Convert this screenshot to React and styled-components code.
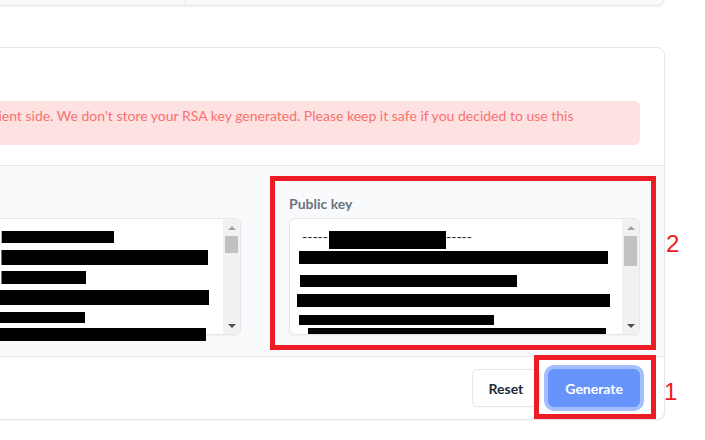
import React from "react";
import styled, { createGlobalStyle } from "styled-components";

const Global = createGlobalStyle`
  html, body { margin: 0; padding: 0; background: #ffffff; }
  body { font-family: Lato, "Liberation Sans", sans-serif; overflow: hidden; }
  * { box-sizing: border-box; }
`;

const Viewport = styled.div`
  position: relative;
  width: 705px;
  height: 440px;
  overflow: hidden;
`;

const Page = styled.div`
  width: 800px;
  margin-left: -135px;
  display: flex;
  flex-direction: column;
  gap: 41px;
`;

const TopCard = styled.div`
  margin-top: -41px;
  height: 47px;
  display: grid;
  grid-template-columns: 320px 1fr;
  background: #f9fafb;
  border: 1px solid #e5e7eb;
  border-radius: 0 0 8px 8px;
  box-shadow: 0 1px 2px rgba(0, 0, 0, 0.05);
  overflow: hidden;
`;

const TopCell = styled.div`
  border-right: ${(p) => (p.$divider ? "1px solid #e5e7eb" : "none")};
`;

const Card = styled.section`
  background: #ffffff;
  border: 1px solid #e5e7eb;
  border-radius: 8px;
  box-shadow: 0 1px 2px rgba(0, 0, 0, 0.05);
  overflow: hidden;
`;

const CardBody = styled.div`
  padding: 53px 24px 20px;
`;

const Alert = styled.div`
  background: #fee2e2;
  color: #f87171;
  border-radius: 6px;
  padding: 6px 16px 2px 18px;
  font-size: 14px;
  line-height: 18px;
`;

const KeysSection = styled.div`
  background: #f9fafb;
  border-top: 1px solid #e5e7eb;
  border-bottom: 1px solid #e5e7eb;
  padding: 28px 24px 21px;
  display: grid;
  grid-template-columns: 1fr 1fr;
  gap: 48px;
`;

const Field = styled.div`
  display: flex;
  flex-direction: column;
  gap: 4px;
  min-width: 0;
`;

const Label = styled.label`
  font-size: 14px;
  line-height: 20px;
  font-weight: 700;
  color: #6b7280;
`;

const KeyBox = styled.div`
  height: 117px;
  display: flex;
  background: #ffffff;
  border: 1px solid #e5e7eb;
  border-radius: 6px;
  box-shadow: 0 1px 2px rgba(0, 0, 0, 0.05);
  overflow: ${(p) => (p.$clip ? "hidden" : "visible")};
`;

const KeyLines = styled.div`
  flex: 1;
  min-width: 0;
  display: flex;
  flex-direction: column;
  align-items: flex-start;
  padding-top: 12px;
`;

const Bar = styled.span`
  display: block;
  flex: none;
  background: #000000;
  width: ${(p) => p.$w}px;
  height: ${(p) => p.$h}px;
  margin-left: ${(p) => p.$x || 0}px;
  margin-top: ${(p) => p.$mt || 0}px;
  box-shadow: ${(p) => (p.$mark ? `-1px 0 0 ${p.$mark}` : "none")};
`;

const HeaderRow = styled.div`
  display: flex;
  align-items: flex-start;
  margin-left: ${(p) => p.$x}px;
`;

const DashText = styled.span`
  font-size: 14px;
  line-height: 12px;
  color: #1f2937;
  width: 27px;
  overflow: hidden;
  white-space: nowrap;
`;

const Scrollbar = styled.div`
  width: 17px;
  flex: none;
  background: #f1f1f1;
  display: flex;
  flex-direction: column;
  border-radius: 0 5px 5px 0;
`;

const ScrollButton = styled.div`
  height: 17px;
  flex: none;
  display: flex;
  align-items: center;
  justify-content: center;
`;

const Arrow = styled.span`
  width: 0;
  height: 0;
  border-left: 4px solid transparent;
  border-right: 4px solid transparent;
  ${(p) =>
    p.$down
      ? "border-top: 4px solid #505050;"
      : "border-bottom: 4px solid #a3a3a3;"}
`;

const Track = styled.div`
  flex: 1;
`;

const Thumb = styled.div`
  margin: 0 2px;
  height: ${(p) => p.$h}px;
  background: #c1c1c1;
`;

const Footer = styled.div`
  display: flex;
  justify-content: flex-end;
  align-items: center;
  gap: 8px;
  padding: 12px 24px;
`;

const Button = styled.button`
  height: 38px;
  padding: 0 16px;
  border-radius: 6px;
  font-family: Lato, "Liberation Sans", sans-serif;
  font-size: 14px;
  font-weight: 700;
  cursor: pointer;
  border: 1px solid ${(p) => (p.$primary ? "#6694fb" : "#e5e7eb")};
  background: ${(p) => (p.$primary ? "#6694fb" : "#ffffff")};
  color: ${(p) => (p.$primary ? "#ffffff" : "#1f2937")};
  box-shadow: ${(p) =>
    p.$primary ? "0 0 0 4px rgba(102, 148, 251, 0.6)" : "0 1px 2px rgba(0,0,0,0.04)"};
`;

const Highlight = styled.div`
  position: absolute;
  left: ${(p) => p.$x}px;
  top: ${(p) => p.$y}px;
  width: ${(p) => p.$w}px;
  height: ${(p) => p.$h}px;
  border: 5px solid #ed1c24;
  pointer-events: none;
`;

const Callout = styled.span`
  position: absolute;
  left: ${(p) => p.$x}px;
  top: ${(p) => p.$y}px;
  font-family: "Liberation Sans", Arial, sans-serif;
  font-size: 24px;
  line-height: 24px;
  color: #ed1c24;
`;

function FakeScrollbar({ thumb }) {
  return (
    <Scrollbar>
      <ScrollButton>
        <Arrow />
      </ScrollButton>
      <Track>
        <Thumb $h={thumb} />
      </Track>
      <ScrollButton>
        <Arrow $down />
      </ScrollButton>
    </Scrollbar>
  );
}

const privateBars = [
  { x: 111, w: 112, h: 12, mt: 0, mark: "#e8a060" },
  { x: 111, w: 206, h: 15, mt: 7, mark: "#3b82f6" },
  { x: 111, w: 84, h: 13, mt: 6, mark: "#3b82f6" },
  { x: 109, w: 209, h: 15, mt: 6 },
  { x: 109, w: 85, h: 11, mt: 7 },
  { x: 109, w: 206, h: 13, mt: 5 },
];

const publicBars = [
  { x: 9, w: 309, h: 13, mt: 2 },
  { x: 10, w: 217, h: 12, mt: 11 },
  { x: 7, w: 313, h: 13, mt: 7 },
  { x: 9, w: 195, h: 10, mt: 8 },
  { x: 18, w: 298, h: 13, mt: 3 },
];

export default function App() {
  return (
    <>
      <Global />
      <Viewport>
        <Page>
          <TopCard>
            <TopCell $divider />
            <TopCell />
          </TopCard>
          <Card>
            <CardBody>
              <Alert>
                Done on the client side. We don't store your RSA key generated.
                Please keep it safe if you decided to use this
                <br />
                key.
              </Alert>
            </CardBody>
            <KeysSection>
              <Field>
                <Label>Private key</Label>
                <KeyBox>
                  <KeyLines>
                    {privateBars.map((b, i) => (
                      <Bar key={i} $x={b.x} $w={b.w} $h={b.h} $mt={b.mt} $mark={b.mark} />
                    ))}
                  </KeyLines>
                  <FakeScrollbar thumb={17} />
                </KeyBox>
              </Field>
              <Field>
                <Label>Public key</Label>
                <KeyBox $clip>
                  <KeyLines>
                    <HeaderRow $x={12}>
                      <DashText>-----</DashText>
                      <Bar $w={117} $h={18} />
                      <DashText>-----</DashText>
                    </HeaderRow>
                    {publicBars.map((b, i) => (
                      <Bar key={i} $x={b.x} $w={b.w} $h={b.h} $mt={b.mt} />
                    ))}
                  </KeyLines>
                  <FakeScrollbar thumb={30} />
                </KeyBox>
              </Field>
            </KeysSection>
            <Footer>
              <Button>Reset</Button>
              <Button $primary>Generate</Button>
            </Footer>
          </Card>
        </Page>
        <Highlight $x={270} $y={176} $w={386} $h={174} />
        <Highlight $x={534} $y={355} $w={122} $h={64} />
        <Callout $x={666} $y={232}>2</Callout>
        <Callout $x={664} $y={380}>1</Callout>
      </Viewport>
    </>
  );
}
